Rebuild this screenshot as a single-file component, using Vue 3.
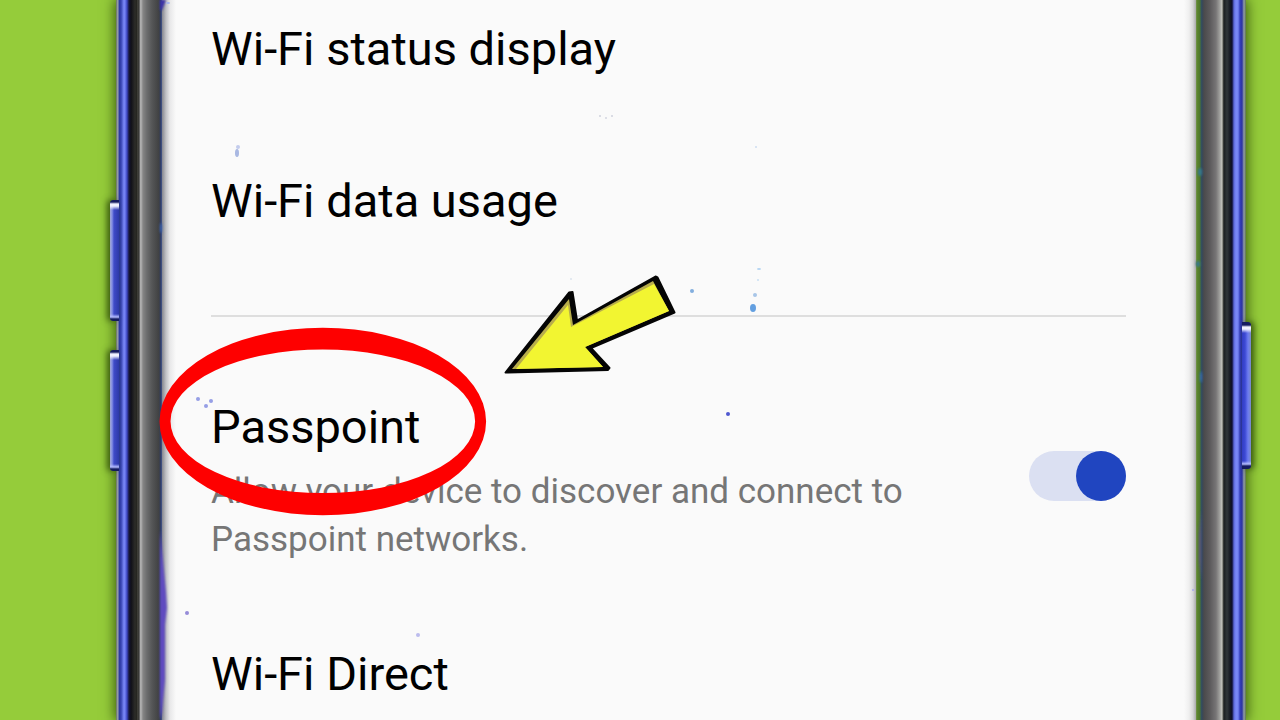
<script setup>
import { ref } from 'vue'

const passpoint = ref(true)

const specks = [
  { x: 238, y: 147, rx: 2, ry: 2, c: '#c3ccec' },
  { x: 237, y: 153, rx: 2, ry: 4, c: '#a9b8e2' },
  { x: 600, y: 116, rx: 1, ry: 1, c: '#cfd2dc' },
  { x: 606, y: 118, rx: 1, ry: 1, c: '#d3d6e0' },
  { x: 612, y: 116, rx: 1, ry: 1, c: '#cfd2dc' },
  { x: 756, y: 147, rx: 1, ry: 1, c: '#cddcf0' },
  { x: 571, y: 279, rx: 1, ry: 1, c: '#dbe3ec' },
  { x: 692, y: 291, rx: 2, ry: 2, c: '#82aede' },
  { x: 759, y: 269, rx: 2, ry: 1, c: '#b4d4f2' },
  { x: 758, y: 280, rx: 1, ry: 1, c: '#c9dff3' },
  { x: 755, y: 295, rx: 2, ry: 2, c: '#a8c6e8' },
  { x: 753, y: 308, rx: 3, ry: 4, c: '#649fe0' },
  { x: 728, y: 414, rx: 2, ry: 2, c: '#5058d0' },
  { x: 198, y: 399, rx: 2, ry: 2, c: '#969fe6' },
  { x: 206, y: 406, rx: 2, ry: 2, c: '#969fe6' },
  { x: 211, y: 401, rx: 2, ry: 2, c: '#969fe6' },
  { x: 187, y: 613, rx: 2, ry: 2, c: '#958cd8' },
  { x: 418, y: 635, rx: 2, ry: 2, c: '#bcbcee' },
  { x: 168, y: 3, rx: 2, ry: 1, c: '#a6b6ee' },
  { x: 1193, y: 590, rx: 1, ry: 1, c: '#a8a8ee' },
]
</script>

<template>
  <div class="scene">
    <div class="phone">
      <div class="frame frame-left">
        <span class="key key-up"></span>
        <span class="key key-down"></span>
      </div>
      <main class="screen">
        <ul class="group">
          <li class="row"><a class="title" href="#status">Wi-Fi status display</a></li>
          <li class="row"><a class="title" href="#usage">Wi-Fi data usage</a></li>
        </ul>
        <hr class="divider" />
        <ul class="group second">
          <li class="row switch-row">
            <div class="text">
              <label class="title" for="passpoint">Passpoint</label>
              <p id="passpoint-summary" class="summary">
                Allow your device to discover and connect to Passpoint networks.
              </p>
            </div>
            <input
              id="passpoint"
              v-model="passpoint"
              class="switch"
              type="checkbox"
              role="switch"
              aria-describedby="passpoint-summary"
            />
          </li>
          <li class="row"><a class="title" href="#direct">Wi-Fi Direct</a></li>
        </ul>
      </main>
      <div class="frame frame-right">
        <span class="key key-power"></span>
      </div>
    </div>

    <svg class="marks" width="100%" height="100%" aria-hidden="true">
      <defs>
        <filter id="soft" x="-200%" y="-10%" width="500%" height="120%">
          <feGaussianBlur stdDeviation="1" />
        </filter>
        <filter id="dust" x="-5%" y="-5%" width="110%" height="110%">
          <feGaussianBlur stdDeviation="0.6" />
        </filter>
      </defs>
      <g filter="url(#soft)">
        <path d="M160 530 L163 560 L166 592 L167 608 L165 625 L165 680 L162 712 L160 720Z" fill="#5e4cc0" />
        <path d="M160 0 H166 L162 10 H160Z" fill="#3b32a8" />
        <path d="M1201 510 L1199 535 L1199 560 L1201 580Z" fill="#5b4b8c" />
        <ellipse cx="1200" cy="172" rx="2" ry="4" fill="#35778c" />
        <ellipse cx="1198" cy="264" rx="2" ry="3" fill="#35778c" />
        <ellipse cx="1201" cy="377" rx="1" ry="6" fill="#326fc0" />
        <ellipse cx="161" cy="228" rx="1" ry="5" fill="#3c66b4" />
      </g>
      <g filter="url(#dust)">
        <ellipse
          v-for="(s, i) in specks"
          :key="i"
          :cx="s.x"
          :cy="s.y"
          :rx="s.rx"
          :ry="s.ry"
          :fill="s.c"
        />
      </g>
      <path
        fill="#fe0000"
        fill-rule="evenodd"
        d="M159.500 421.500a163.300 93.700 0 1 0 326.600 0a163.300 93.700 0 1 0 -326.600 0Z
           M170.500 421.300a152.300 71.800 0 1 0 304.600 0a152.300 71.800 0 1 0 -304.600 0Z"
      />
      <path
        d="M505.500 372.500 L569 292.500 L572.500 292 L577 320.500 L655.500 276.500 L657.500 277.500 L674.500 312.500 L591 348 L609.500 368 L608 370Z"
        fill="#050505" stroke="#050505" stroke-width="2" stroke-linejoin="round"
      />
      <path d="M512 369 L569 299 L573 325 L653 281 L669 311 L585 347 L603 367Z" fill="#b8ad4c" />
      <path d="M516 369 L568 305 L571 327 L654 284 L669 311 L585 347 L603 367Z" fill="#f2f531" />
    </svg>
  </div>
</template>

<style>
body {
  margin: 0;
}
</style>

<style scoped>
.scene {
  position: relative;
  box-sizing: border-box;
  height: 100vh;
  padding: 0 34px 0 116px;
  overflow: hidden;
  background: #95cc3a;
  font-family: Roboto, "Liberation Sans", sans-serif;
}

.phone {
  display: flex;
  height: 100%;
  box-shadow: 0 0 12px 1px rgba(30, 55, 0, 0.8);
}

.frame {
  position: relative;
  flex: none;
}

.frame-left {
  width: 46px;
  background: linear-gradient(
    to right,
    #66705c 0, #a3a9b8 2px, #2b389c 3px, #3642b0 5px, #7b89f8 8px, #6f7cf0 9px,
    #3c45c0 11px, #16163c 13px, #101018 15px, #2c2c28 19px, #24241f 21px,
    #55554f 22px, #1d1d1c 23px, #aaaaaa 24px, #b2b2b2 25px, #858585 27px,
    #6b6c6d 31px, #555657 36px, #404142 43px, #2c3c70 45px, #50608c 46px
  );
}

.frame-right {
  width: 50px;
  background: linear-gradient(
    to right,
    #7c9658 0, #5c872e 1px, #4c752b 4px, #335660 5px, #34485c 6px, #4a4a4c 8px,
    #5c5a5c 14px, #777576 20px, #a3a3a0 24px, #c5c5bd 26px, #55564f 27px,
    #1b1f20 28px, #303638 31px, #171a22 34px, #0e0e30 36px, #5e69dd 38px,
    #7b88f8 40px, #7582f4 42px, #353ebd 44px, #2c34a0 46px, #94a0a4 48px, #5b714a 50px
  );
}

.key {
  position: absolute;
  width: 9px;
}

.key-up,
.key-down {
  left: -6px;
  background:
    linear-gradient(to bottom, #141b60 0, #141b60 2px, #f0f2ff 4px, #f0f2ff 6px, transparent 10px),
    linear-gradient(to top, #141b60 0, #141b60 2px, #b4bcff 4px, transparent 7px),
    linear-gradient(to right, #a2a8d0 0, #8590e6 2px, #3f4bc8 4px, #2d39a8 9px);
  box-shadow: -3px 0 6px rgba(30, 55, 0, 0.7);
  border-radius: 3px 0 0 3px;
}

.key-up {
  top: 200px;
  height: 121px;
}

.key-down {
  top: 350px;
  height: 121px;
}

.key-power {
  top: 322px;
  right: -5px;
  height: 147px;
  background:
    linear-gradient(to bottom, #141b60 0, #141b60 3px, #f0f2ff 5px, #f0f2ff 7px, transparent 11px),
    linear-gradient(to top, #141b60 0, #141b60 3px, #b4bcff 5px, transparent 8px),
    linear-gradient(to right, #323dc4 0, #3c49d4 3px, #6d7cf0 6px, #7b8bc8 9px);
  box-shadow: 3px 0 6px rgba(30, 55, 0, 0.7);
  border-radius: 0 3px 3px 0;
}

.screen {
  flex: 1;
  min-width: 0;
  box-sizing: border-box;
  padding: 0 70px 0 49px;
  background:
    linear-gradient(to right, #85868e, #c0c1c5 4px, #e8e8e9 8px, transparent 14px),
    linear-gradient(to left, #a9aaaa, #d5d6d6 3px, #efefef 7px, transparent 12px),
    #fafafa;
}

.group {
  margin: 0;
  padding: 0;
  list-style: none;
}

.row {
  padding: 49px 0;
}

.group:first-child .row:first-child {
  padding-top: 22px;
}

.title {
  display: block;
  color: #000;
  font-size: 47px;
  line-height: 54px;
  text-decoration: none;
}

.divider {
  height: 2px;
  margin: 38px 0 0;
  border: 0;
  background: #dedede;
}

.second {
  padding-top: 34px;
}

.switch-row {
  display: flex;
  align-items: center;
  justify-content: space-between;
  padding-bottom: 34px;
}

.text {
  max-width: 740px;
}

.summary {
  margin: 14px 0 0;
  color: #767676;
  font-size: 35px;
  line-height: 48px;
}

.switch {
  flex: none;
  width: 97px;
  height: 50px;
  margin: 0 0 12px;
  border-radius: 25px;
  appearance: none;
  background: #dbe0f2;
}

.switch::before {
  display: block;
  width: 50px;
  height: 50px;
  border-radius: 50%;
  background: #2045c0;
  content: "";
}

.switch:checked::before {
  margin-left: auto;
}

.marks {
  position: absolute;
  inset: 0;
  pointer-events: none;
}
</style>
